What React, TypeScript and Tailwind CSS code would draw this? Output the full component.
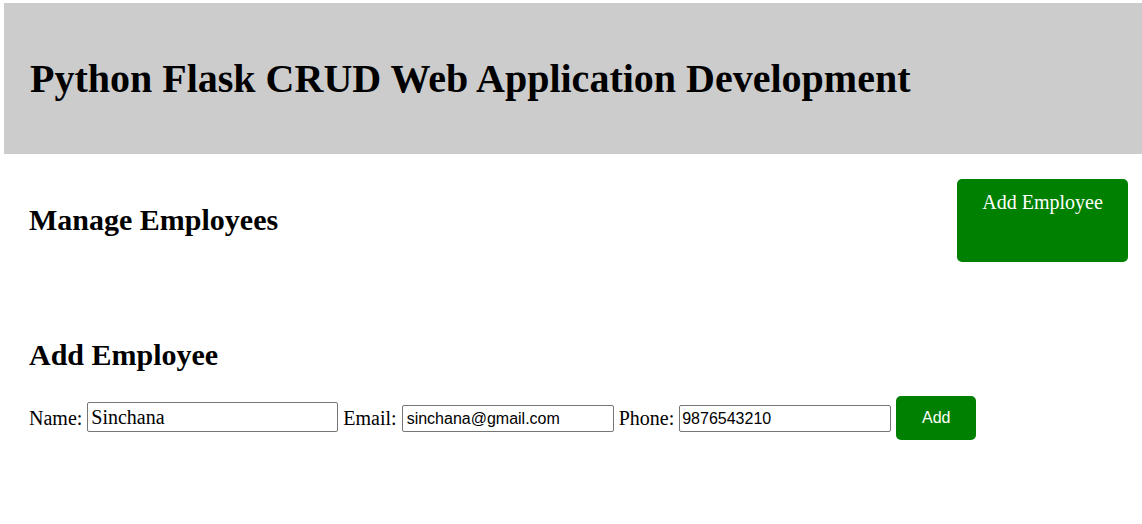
export default function App() {
    return (
        <div className="min-h-screen bg-white text-black" style={{ fontFamily: '"Liberation Serif", "Times New Roman", serif' }}>
            <header className="ml-[4px] mt-[3px] h-[151px] bg-[#cccccc] flex items-center pl-[26px]">
                <h1 className="text-[40px] leading-[46px] font-bold">Python Flask CRUD Web Application Development</h1>
            </header>

            <section className="pl-[29px] pr-[14px]">
                <div className="flex items-center justify-between pt-[25px]">
                    <h2 className="text-[30px] leading-[34px] font-bold -mt-[2px]">Manage Employees</h2>
                    <button className="w-[171px] h-[83px] bg-[#008000] text-white text-[20px] leading-[23px] rounded-[5px] flex justify-center pt-[12px]">
                        Add Employee
                    </button>
                </div>

                <h2 className="mt-[76px] text-[30px] leading-[34px] font-bold">Add Employee</h2>

                <form className="mt-[24px] flex items-center gap-[5px] text-[20px]">
                    <label>Name:</label>
                    <input
                        defaultValue="Sinchana"
                        className="w-[251px] h-[30px] border border-[#767676] rounded-[2px] px-[3px] text-[20px] outline-none -mt-[2px]"
                    />
                    <label>Email:</label>
                    <input
                        defaultValue="sinchana@gmail.com"
                        className="w-[212px] h-[27px] border border-[#767676] rounded-[2px] px-[4px] text-[16px] outline-none mt-[1px]"
                        style={{ fontFamily: '"Liberation Sans", Arial, sans-serif' }}
                    />
                    <label>Phone:</label>
                    <input
                        defaultValue="9876543210"
                        className="w-[212px] h-[27px] border border-[#767676] rounded-[2px] px-[2px] text-[16px] outline-none mt-[1px]"
                        style={{ fontFamily: '"Liberation Sans", Arial, sans-serif' }}
                    />
                    <button
                        type="button"
                        className="w-[80px] h-[44px] bg-[#008000] text-white text-[16px] rounded-[5px]"
                        style={{ fontFamily: '"Liberation Sans", Arial, sans-serif' }}
                    >
                        Add
                    </button>
                </form>
            </section>
        </div>
    );
}
